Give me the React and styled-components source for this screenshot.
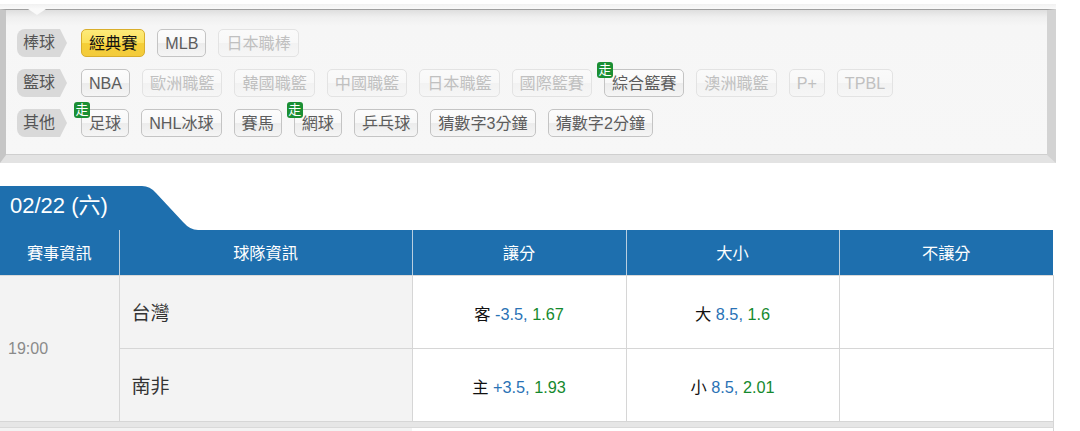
import React from "react";
import styled, { createGlobalStyle } from "styled-components";

const FONT = `"Liberation Sans", "Noto Sans CJK TC", sans-serif`;

const GlobalStyle = createGlobalStyle`
  html, body {
    margin: 0;
    padding: 0;
    background: #fff;
    overflow: hidden;
    font-family: ${FONT};
  }
`;

const Page = styled.div`
  width: 1080px;
  height: 431px;
  padding-top: 4px;
  box-sizing: border-box;
  overflow: hidden;
`;

const TopStrip = styled.div`
  width: 1056px;
  height: 5px;
  background: linear-gradient(#f1f1f1, #fafafa);
`;

const Panel = styled.div`
  position: relative;
  box-sizing: border-box;
  width: 1056px;
  height: 154px;
  padding: 19px 0 0 11px;
  border-style: solid;
  border-width: 1px 9px 8px 6px;
  border-color: #9f9f9f #d3d3d3 #e3e3e3 #c6c6c6;
  background: linear-gradient(#dedede 0, #efefef 7px, #f6f6f6 16px, #f7f7f7 100%);
  box-shadow: inset 0 -1px 0 #cfcfcf;
  display: flex;
  flex-direction: column;
  gap: 12px;

  &::before {
    content: "";
    position: absolute;
    left: 22px;
    top: -1px;
    border-style: solid;
    border-width: 6px 9px 0 9px;
    border-color: #fafafa transparent transparent transparent;
  }
`;

const Row = styled.div`
  display: flex;
  align-items: center;
  gap: 12px;
`;

const Label = styled.div`
  position: relative;
  box-sizing: border-box;
  width: 43px;
  height: 28px;
  margin-right: 9px;
  padding-left: 6px;
  line-height: 27px;
  font-size: 16px;
  color: #555;
  background: #d9d9d9;
  border-radius: 8px 0 0 8px;
  white-space: nowrap;

  &::after {
    content: "";
    position: absolute;
    left: 43px;
    top: 0;
    border-style: solid;
    border-width: 14px 0 14px 7px;
    border-color: transparent transparent transparent #d9d9d9;
  }
`;

const Chip = styled.div`
  position: relative;
  box-sizing: border-box;
  height: 28px;
  padding: 0 7px;
  line-height: 26px;
  font-size: 16.1px;
  white-space: nowrap;
  border-radius: 5px;
  border: 1px solid ${(p) => (p.$active ? "#d9ae2c" : p.$off ? "#e3e3e3" : "#c4c4c4")};
  color: ${(p) => (p.$active ? "#111" : p.$off ? "#c0c0c0" : "#5c5c5c")};
  background: ${(p) =>
    p.$active
      ? "linear-gradient(#fdeb7a 0, #fbe059 50%, #f5cf38 52%, #f3cb3c 100%)"
      : p.$off
      ? "linear-gradient(#fafafa 0, #f8f8f8 50%, #f2f2f2 52%, #f6f6f6 100%)"
      : "linear-gradient(#fcfcfc 0, #f8f8f8 50%, #ececec 52%, #f5f5f5 100%)"};
`;

const Badge = styled.span`
  position: absolute;
  left: -8px;
  top: -8px;
  width: 16px;
  height: 16px;
  line-height: 15px;
  text-align: center;
  font-size: 13px;
  color: #fff;
  background: #1b8f34;
  border-radius: 3px;
`;

const Schedule = styled.div`
  margin-top: 23px;
  width: 1053px;
`;

const DateTab = styled.div`
  box-sizing: border-box;
  width: 200px;
  height: 44px;
  padding: 7px 0 0 10px;
  line-height: 26px;
  font-size: 22px;
  color: #fff;
  background: #1e6fae;
  clip-path: path("M0 0 H142 Q150 0 156 7 L183 36 Q190 44 198 44 H0 Z");
`;

const Table = styled.table`
  width: 1053px;
  table-layout: fixed;
  border-collapse: collapse;
  font-size: 16.3px;
`;

const Head = styled.th`
  height: 43px;
  padding: 0 0 2px;
  font-weight: normal;
  font-size: 16.2px;
  color: #fff;
  background: #1e6fae;
  border-left: 1px solid #b9cfe0;
  border-bottom: 1px solid #d9d9d9;

  &:first-child {
    border-left: 0;
  }
`;

const Cell = styled.td`
  height: 72px;
  padding: 0;
  text-align: center;
  background: #fff;
  border-left: 1px solid #d6d6d6;
  border-bottom: 1px solid #d6d6d6;

  &:last-child {
    border-right: 1px solid #d6d6d6;
  }
`;

const BetCell = styled(Cell)`
  height: 71px;
  padding-top: 1px;
`;

const TimeCell = styled(Cell)`
  padding: 0 0 0 8px;
  text-align: left;
  font-size: 16px;
  color: #8a8a8a;
  background: #f3f3f3;
  border-left: 0;
`;

const TeamCell = styled(Cell)`
  height: 70px;
  padding: 0 0 2px 12px;
  text-align: left;
  font-size: 19px;
  color: #333;
  background: #f3f3f3;
`;

const Band = styled.td`
  height: 5px;
  padding: 0;
  background: #e6e6e6;
  border-bottom: 1px solid #d9d9d9;
  border-right: 1px solid #d6d6d6;
`;

const Rest = styled.td`
  height: 20px;
  padding: 0;
  background: ${(p) => (p.$grey ? "#f3f3f3" : "#fff")};
  border-right: ${(p) => (p.$grey ? "0" : "1px solid #d6d6d6")};
`;

const Side = styled.span`
  color: #111;
`;

const Line = styled.span`
  color: #2a72b5;
`;

const Odds = styled.span`
  color: #15892e;
`;

const rows = [
  {
    label: "棒球",
    items: [{ name: "經典賽", active: true }, { name: "MLB" }, { name: "日本職棒", off: true }],
  },
  {
    label: "籃球",
    items: [
      { name: "NBA" },
      { name: "歐洲職籃", off: true },
      { name: "韓國職籃", off: true },
      { name: "中國職籃", off: true },
      { name: "日本職籃", off: true },
      { name: "國際籃賽", off: true },
      { name: "綜合籃賽", live: true },
      { name: "澳洲職籃", off: true },
      { name: "P+", off: true },
      { name: "TPBL", off: true },
    ],
  },
  {
    label: "其他",
    items: [
      { name: "足球", live: true },
      { name: "NHL冰球" },
      { name: "賽馬" },
      { name: "網球", live: true },
      { name: "乒乓球" },
      { name: "猜數字3分鐘" },
      { name: "猜數字2分鐘" },
    ],
  },
];

const Bet = ({ side, line, odds }) => (
  <BetCell>
    <Side>{side}</Side> <Line>{line},</Line> <Odds>{odds}</Odds>
  </BetCell>
);

const App = () => {
  return (
    <Page>
      <GlobalStyle />
      <TopStrip />
      <Panel>
        {rows.map((row) => (
          <Row key={row.label}>
            <Label>{row.label}</Label>
            {row.items.map((item) => (
              <Chip key={item.name} $active={item.active} $off={item.off}>
                {item.live && <Badge>走</Badge>}
                {item.name}
              </Chip>
            ))}
          </Row>
        ))}
      </Panel>
      <Schedule>
        <DateTab>02/22 (六)</DateTab>
        <Table>
          <colgroup>
            <col width="119" />
            <col width="293" />
            <col width="214" />
            <col width="213" />
            <col width="214" />
          </colgroup>
          <thead>
            <tr>
              <Head>賽事資訊</Head>
              <Head>球隊資訊</Head>
              <Head>讓分</Head>
              <Head>大小</Head>
              <Head>不讓分</Head>
            </tr>
          </thead>
          <tbody>
            <tr>
              <TimeCell rowSpan={2}>19:00</TimeCell>
              <TeamCell>台灣</TeamCell>
              <Bet side="客" line="-3.5" odds="1.67" />
              <Bet side="大" line="8.5" odds="1.6" />
              <Cell />
            </tr>
            <tr>
              <TeamCell>南非</TeamCell>
              <Bet side="主" line="+3.5" odds="1.93" />
              <Bet side="小" line="8.5" odds="2.01" />
              <Cell />
            </tr>
            <tr>
              <Band colSpan={5} />
            </tr>
            <tr>
              <Rest $grey colSpan={2} />
              <Rest colSpan={3} />
            </tr>
          </tbody>
        </Table>
      </Schedule>
    </Page>
  );
};

export default App;
